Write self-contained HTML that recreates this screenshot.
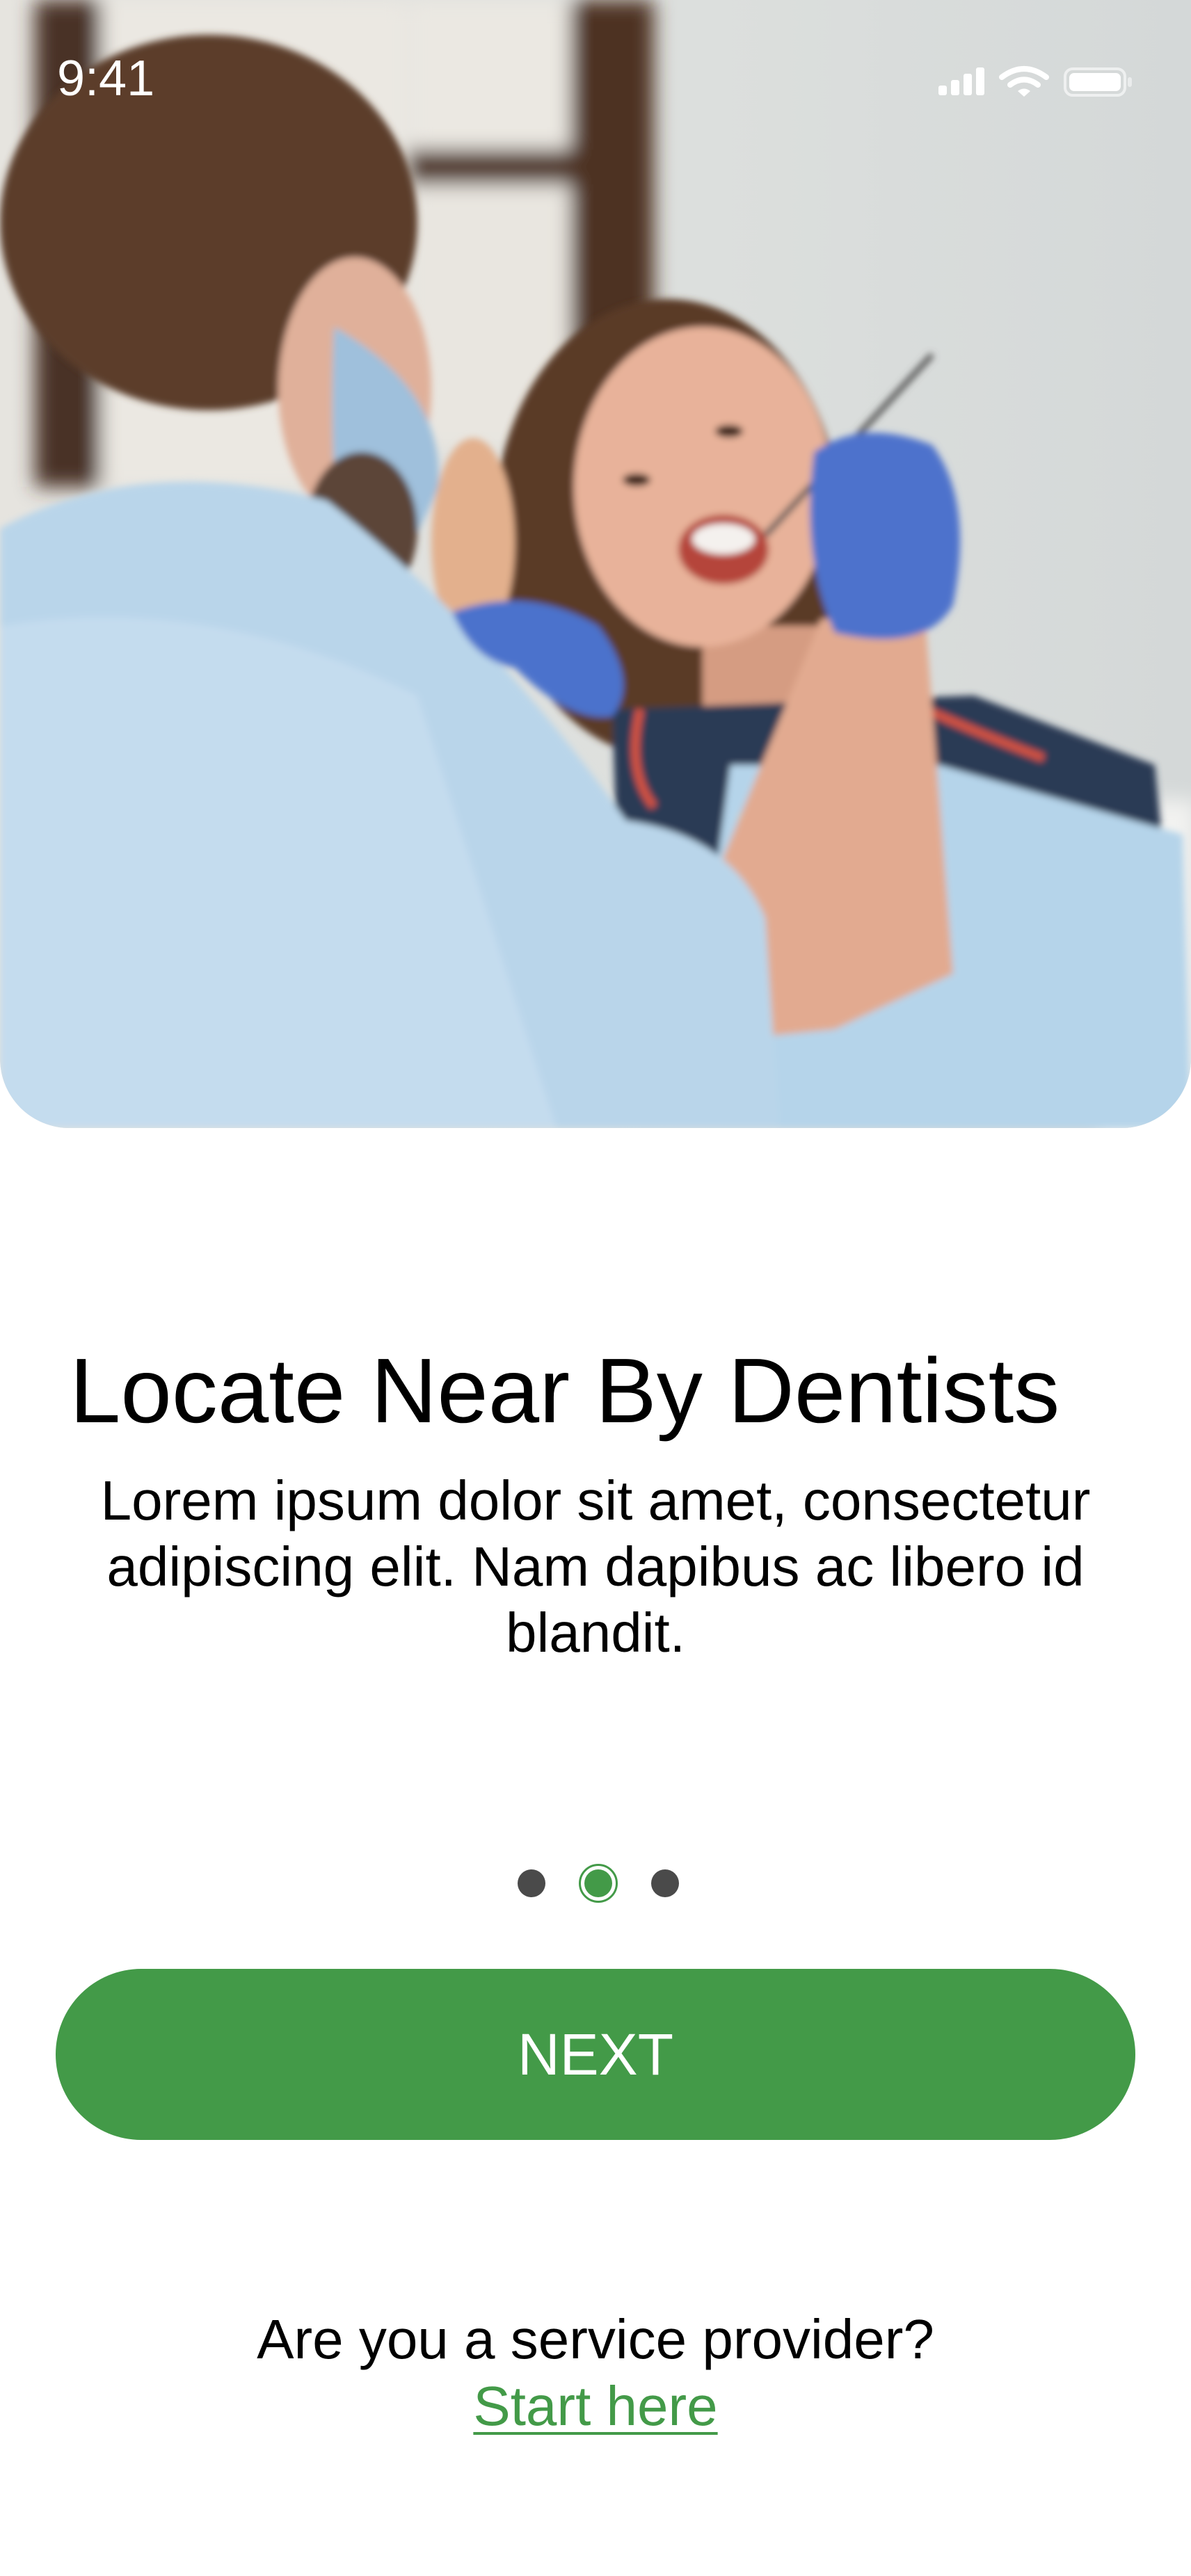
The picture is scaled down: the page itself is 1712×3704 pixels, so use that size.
<!DOCTYPE html>
<html><head><meta charset="utf-8"><style>
html,body{margin:0;padding:0;background:#fff;}
body{width:1712px;height:3704px;position:relative;overflow:hidden;font-family:"Liberation Sans",Arial,sans-serif;}
.photo{position:absolute;left:0;top:0;width:1712px;height:1622px;border-radius:0 0 100px 100px;overflow:hidden;background:#dfe2e1;}
.t{position:absolute;white-space:nowrap;}
</style></head><body>
<div class="photo">
<svg width="1712" height="1622" viewBox="0 0 1712 1622">
<defs>
<filter id="b" x="-20%" y="-20%" width="140%" height="140%"><feGaussianBlur stdDeviation="14"/></filter>
<filter id="b2"><feGaussianBlur stdDeviation="5"/></filter>
<linearGradient id="bg" x1="0" x2="1"><stop offset="0" stop-color="#e6e4df"/><stop offset="0.6" stop-color="#dcdfdd"/><stop offset="1" stop-color="#d4d8d8"/></linearGradient>
</defs>
<rect width="1712" height="1622" fill="url(#bg)"/>
<g filter="url(#b)">
<rect x="50" y="0" width="95" height="700" fill="#4a3226"/>
<rect x="820" y="0" width="120" height="620" fill="#4e3324"/>
<rect x="580" y="215" width="260" height="50" fill="#4e3324"/>
<rect x="145" y="0" width="440" height="700" fill="#ebe8e2"/>
<rect x="590" y="0" width="230" height="215" fill="#ebe8e2"/>
<rect x="590" y="265" width="230" height="380" fill="#e9e6e0"/>
<rect x="1580" y="1150" width="140" height="480" fill="#f2f2f0"/>
</g>
<g filter="url(#b2)">
<ellipse cx="960" cy="760" rx="250" ry="330" fill="#5a3a28"/>
<ellipse cx="680" cy="780" rx="60" ry="150" fill="#e3b08d"/>
<rect x="1010" y="900" width="190" height="220" fill="#d59c82"/>
<ellipse cx="1010" cy="700" rx="185" ry="230" fill="#e8b29a"/>
<ellipse cx="1040" cy="790" rx="65" ry="50" fill="#b5443a"/>
<ellipse cx="1040" cy="775" rx="45" ry="22" fill="#f4f1ee"/>
<ellipse cx="915" cy="690" rx="20" ry="9" fill="#3a2418"/>
<ellipse cx="1048" cy="620" rx="20" ry="9" fill="#3a2418"/>
<path d="M880 1020 L1400 1000 L1660 1100 L1712 1622 L900 1622 Z" fill="#2b3a55"/>
<path d="M1050 1100 L1350 1100 L1700 1200 L1712 1622 L980 1622 Z" fill="#b5d4ea"/>
<path d="M1060 1170 L1170 1170 L1180 1400 L1070 1400 Z" fill="#c8ddd5"/>
<path d="M920 1020 Q900 1110 940 1160" stroke="#d6533f" stroke-width="12" fill="none"/>
<path d="M1330 1020 Q1420 1060 1500 1090" stroke="#d6533f" stroke-width="12" fill="none"/>
<path d="M1180 890 L1330 890 L1370 1400 L1200 1480 L1000 1500 L1000 1330 Z" fill="#e2aa90"/>
<path d="M1100 770 L1340 510" stroke="#555" stroke-width="8"/>
<path d="M1170 650 Q1240 600 1340 640 Q1400 720 1370 870 Q1330 940 1200 910 Q1150 800 1170 650 Z" fill="#4d72cc"/>
<ellipse cx="300" cy="320" rx="300" ry="270" fill="#5b3e2a"/>
<ellipse cx="510" cy="560" rx="110" ry="190" fill="#e0b09a"/>
<path d="M480 470 Q640 560 630 700 Q560 870 500 860 Q470 700 480 470 Z" fill="#9fc0dc"/>
<ellipse cx="520" cy="760" rx="80" ry="110" fill="#5c4537"/>
<path d="M0 760 Q200 650 470 720 Q700 900 900 1180 Q1050 1200 1100 1320 L1120 1622 L0 1622 Z" fill="#b9d5ea"/>
<path d="M0 900 Q300 850 600 1000 L800 1622 L0 1622 Z" fill="#c4dcee"/>
<path d="M650 880 Q760 840 860 900 Q920 980 880 1030 Q820 1040 740 960 Q680 950 650 880 Z" fill="#4b72cc"/>
</g>
</svg>
<div class="t" style="left:82px;top:72px;font-size:72px;color:#fff;">9:41</div>
<svg style="position:absolute;left:1345px;top:93px" width="285" height="50" viewBox="0 0 285 50">
<rect x="4" y="30" width="12" height="14" rx="3" fill="#fff"/>
<rect x="22" y="22" width="12" height="22" rx="3" fill="#fff"/>
<rect x="40" y="13" width="12" height="31" rx="3" fill="#fff"/>
<rect x="58" y="4" width="12" height="40" rx="3" fill="#fff"/>
<path d="M95 18 Q127 -6 159 18" stroke="#fff" stroke-width="8" fill="none" stroke-linecap="round"/>
<path d="M107 29 Q127 14 147 29" stroke="#fff" stroke-width="8" fill="none" stroke-linecap="round"/>
<path d="M118 38 L127 46 L136 38 Q127 31 118 38 Z" fill="#fff"/>
<rect x="186" y="6" width="86" height="38" rx="11" fill="none" stroke="#fff" stroke-opacity="0.6" stroke-width="4"/>
<rect x="192" y="12" width="74" height="26" rx="7" fill="#fff"/>
<rect x="276" y="18" width="6" height="14" rx="3" fill="#fff" fill-opacity="0.5"/>
</svg>
</div>

<div class="t" style="left:100px;top:1924px;font-size:132px;color:#000;">Locate Near By Dentists</div>
<div style="position:absolute;left:0;width:1712px;top:2110px;text-align:center;font-size:80px;line-height:95px;color:#000;">Lorem ipsum dolor sit amet, consectetur<br>adipiscing elit. Nam dapibus ac libero id<br>blandit.</div>

<div style="position:absolute;left:744px;top:2688px;width:40px;height:40px;border-radius:50%;background:#4a4a4a;"></div>
<div style="position:absolute;left:832px;top:2680px;width:50px;height:50px;border-radius:50%;border:3px solid #439a48;background:#fff;"></div>
<div style="position:absolute;left:840px;top:2688px;width:40px;height:40px;border-radius:50%;background:#439a48;"></div>
<div style="position:absolute;left:936px;top:2688px;width:40px;height:40px;border-radius:50%;background:#4a4a4a;"></div>

<div style="position:absolute;left:80px;top:2831px;width:1552px;height:246px;border-radius:123px;background:#439a48;color:#fff;font-size:84px;line-height:246px;text-align:center;">NEXT</div>

<div style="position:absolute;left:0;width:1712px;top:3316px;text-align:center;font-size:80px;line-height:96px;color:#000;">Are you a service provider?<br><span style="color:#439a48;text-decoration:underline;text-decoration-thickness:4px;text-underline-offset:10px;">Start here</span></div>
</body></html>
